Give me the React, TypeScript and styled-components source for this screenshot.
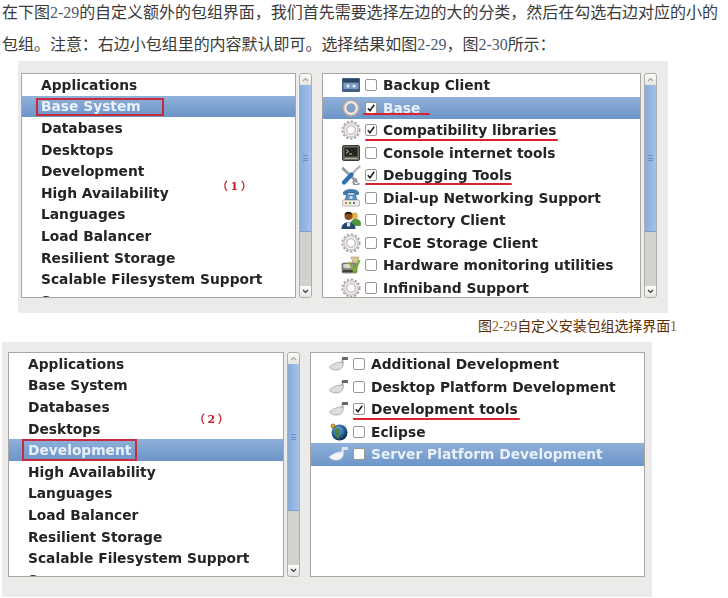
import React from "react";
import styled, { createGlobalStyle } from "styled-components";

const Global = createGlobalStyle`
  html, body { margin: 0; padding: 0; background: #fff; }
  body { width: 728px; height: 598px; overflow: hidden; }
`;

const Page = styled.div`
  display: flex;
  flex-direction: column;
  width: 728px;
  height: 598px;
  overflow: hidden;
`;

const Intro = styled.div`
  display: flex;
  flex-direction: column;
  gap: 8px;
  padding: 1px 0 0 2px;
  font-family: "Liberation Serif", "Noto Sans CJK SC", serif;
  font-size: 16px;
  line-height: 24px;
  font-weight: 400;
  letter-spacing: -0.03px;
  color: #3a3a3a;
  white-space: nowrap;
`;

const Num = styled.span`
  color: #4a5a70;
`;

const Panel = styled.div<{ $left: number; $top: number; $pl: number; $pt: number; $pb: number; $gap: number }>`
  display: flex;
  align-items: flex-start;
  flex: none;
  box-sizing: border-box;
  position: relative;
  width: 650px;
  margin-left: ${(p) => p.$left}px;
  margin-top: ${(p) => p.$top}px;
  padding: ${(p) => `${p.$pt}px 0 ${p.$pb}px ${p.$pl}px`};
  gap: 3px;
  background: #ecebe9;
  filter: blur(0.45px);
  & > *:nth-child(3) { margin-left: ${(p) => p.$gap - 3}px; }
`;

const List = styled.div<{ $w: number }>`
  box-sizing: border-box;
  flex: none;
  width: ${(p) => p.$w}px;
  height: 225px;
  border: 1px solid #a8a6a2;
  background: #fff;
  overflow: hidden;
`;

const Row = styled.div<{ $h: number; $sel?: boolean; $pad: number }>`
  position: relative;
  box-sizing: border-box;
  display: flex;
  align-items: center;
  height: ${(p) => p.$h}px;
  padding-left: ${(p) => p.$pad}px;
  background: ${(p) => (p.$sel ? "linear-gradient(#8fb0d9, #6c95c8)" : "transparent")};
  color: ${(p) => (p.$sel ? "#e9f0fa" : "#242424")};
  font-family: "DejaVu Sans", sans-serif;
  font-weight: 700;
  font-size: 13.8px;
  white-space: nowrap;
`;

const IconSlot = styled.span`
  flex: none;
  display: flex;
  width: 20px;
  height: 20px;
  margin-right: 4px;
`;

const Check = styled.span`
  flex: none;
  display: flex;
  align-items: center;
  justify-content: center;
  box-sizing: border-box;
  width: 12px;
  height: 12px;
  margin-right: 6px;
  border: 1px solid #989692;
  border-radius: 2px;
  background: #fff;
`;

const RedBox = styled.span<{ $l: number; $w: number; $t: number; $b: number }>`
  position: absolute;
  left: ${(p) => p.$l}px;
  width: ${(p) => p.$w}px;
  top: ${(p) => p.$t}px;
  bottom: ${(p) => p.$b}px;
  box-sizing: border-box;
  border: 2px solid #c92b3c;
`;

const Underline = styled.span<{ $l: number; $w: number; $b: number }>`
  position: absolute;
  left: ${(p) => p.$l}px;
  width: ${(p) => p.$w}px;
  bottom: ${(p) => p.$b}px;
  height: 2px;
  border-radius: 1px;
  background: #d9232e;
`;

const Mark = styled.span<{ $l: number; $t: number }>`
  position: absolute;
  left: ${(p) => p.$l}px;
  top: ${(p) => p.$t}px;
  font-family: "DejaVu Serif", "Noto Sans CJK SC", serif;
  font-size: 11px;
  line-height: 14px;
  font-weight: 700;
  color: #c8202a;
  letter-spacing: 2.5px;
  white-space: nowrap;
`;

const Scroll = styled.div`
  flex: none;
  display: flex;
  flex-direction: column;
  width: 13px;
  height: 225px;
  box-sizing: border-box;
  border: 1px solid #b0aeaa;
  border-radius: 3px;
  background: #d3d1ce;
  overflow: hidden;
`;

const Arrow = styled.div`
  flex: none;
  display: flex;
  align-items: center;
  justify-content: center;
  height: 11px;
  background: linear-gradient(#fbfbfa, #e6e5e3);
`;

const Thumb = styled.div`
  flex: none;
  display: flex;
  align-items: center;
  justify-content: center;
  height: 147px;
  background: linear-gradient(90deg, #86acdb, #a4c2e8);
  border-bottom: 1px solid #7d9dc6;
  box-sizing: border-box;
`;

const Grip = styled.div`
  width: 5px;
  height: 6px;
  border-top: 1px solid #6d8fbb;
  border-bottom: 1px solid #6d8fbb;
  box-sizing: border-box;
  background: linear-gradient(#6d8fbb, #6d8fbb) center / 100% 1px no-repeat;
`;

const Track = styled.div`
  flex: 1;
`;

const Caption = styled.div`
  flex: none;
  padding-left: 478px;
  font-family: "Liberation Serif", "Noto Sans CJK SC", serif;
  font-size: 14px;
  line-height: 28px;
  letter-spacing: -0.1px;
  color: #5f2c00;
  white-space: nowrap;
`;

const CapNum = styled.span`
  color: #8a5a1c;
`;

const Chevron = ({ up }: { up?: boolean }) => (
  <svg width="7" height="5" viewBox="0 0 7 5">
    <path d={up ? "M1 4 L3.5 1.5 L6 4" : "M1 1 L3.5 3.5 L6 1"} fill="none" stroke={up ? "#a9a7a3" : "#3a3a3a"} strokeWidth="1.2" />
  </svg>
);

const ScrollBar = () => (
  <Scroll>
    <Arrow><Chevron up /></Arrow>
    <Thumb><Grip /></Thumb>
    <Track />
    <Arrow><Chevron /></Arrow>
  </Scroll>
);

const Gear = () => (
  <svg width="20" height="20" viewBox="0 0 20 20">
    <circle cx="10" cy="10" r="8.6" fill="none" stroke="#a89f9c" strokeWidth="1.8" strokeDasharray="2.4 1.6" />
    <circle cx="10" cy="10" r="6" fill="none" stroke="#c9c2bf" strokeWidth="3.6" />
    <circle cx="10" cy="10" r="5.6" fill="none" stroke="#f4f1f0" strokeWidth="1.6" />
    <circle cx="10" cy="10" r="4.2" fill="none" stroke="#9c9492" strokeWidth="0.6" />
  </svg>
);

const Drive = () => (
  <svg width="20" height="20" viewBox="0 0 20 20">
    <rect x="1" y="3" width="18" height="14" rx="1" fill="#3f5f86" />
    <rect x="2" y="4" width="16" height="3" fill="#2d4568" />
    <rect x="2.5" y="8" width="15" height="6" fill="#7f9cc0" />
    <circle cx="7" cy="11" r="1.5" fill="#e6edf5" />
    <circle cx="13" cy="11" r="1.5" fill="#e6edf5" />
  </svg>
);

const Terminal = () => (
  <svg width="20" height="20" viewBox="0 0 20 20">
    <rect x="1.5" y="2.5" width="17" height="15" rx="1.5" fill="#6d6e68" stroke="#3a3a36" />
    <rect x="3.5" y="4.5" width="13" height="9" fill="#23261f" />
    <path d="M5 6.5 L7.5 8.5 L5 10.5 M8 11 H11" fill="none" stroke="#d8d8d0" strokeWidth="0.9" />
    <rect x="3.5" y="15" width="13" height="1" fill="#b4b4ac" />
  </svg>
);

const Tools = () => (
  <svg width="20" height="20" viewBox="0 0 20 20">
    <path d="M2 1.5 L5 4.5 L4 6.5 L2 6 L0.5 3.5 Z" fill="#9a9ea2" />
    <path d="M4 5.5 L15.5 16.5" stroke="#9a9ea2" strokeWidth="2.8" strokeLinecap="round" />
    <path d="M16 14.5 a2.8 2.8 0 1 0 2 3.5" fill="none" stroke="#8b8f93" strokeWidth="1.8" />
    <path d="M18.5 1.5 L11 9" stroke="#b4b8bc" strokeWidth="2.4" strokeLinecap="round" />
    <path d="M10.5 9.5 L3 17.5" stroke="#2f6fb4" strokeWidth="4.2" strokeLinecap="round" />
  </svg>
);

const Phone = () => (
  <svg width="20" height="20" viewBox="0 0 20 20">
    <path d="M2.5 4 C5 0.5 15 0.5 17.5 4 V6.5 H13.5 V5 H6.5 V6.5 H2.5 Z" fill="#3e7cb5" stroke="#27537e" strokeWidth="0.6" />
    <path d="M5.5 7 H14.5 L16 12 H4 Z" fill="#5b97cb" stroke="#27537e" strokeWidth="0.6" />
    <circle cx="10" cy="9.5" r="1.6" fill="#d7e6f3" />
    <rect x="1.5" y="12" width="17" height="6" rx="0.8" fill="#efeee9" stroke="#8f8f88" strokeWidth="0.6" />
    <rect x="4" y="14" width="2" height="2" fill="#d07a34" />
    <rect x="8" y="14" width="2" height="2" fill="#5d9b3e" />
    <rect x="12" y="14" width="2" height="2" fill="#3e7cb5" />
  </svg>
);

const People = () => (
  <svg width="20" height="20" viewBox="0 0 20 20">
    <circle cx="13.5" cy="6" r="3.4" fill="#e3b04a" />
    <path d="M10 13 C10 8 19.5 8 19.5 13 V15.5 H10 Z" fill="#4e9a3a" stroke="#2f6a22" strokeWidth="0.5" />
    <circle cx="7.5" cy="6" r="4" fill="#8a4f1e" />
    <path d="M3.6 5 C4 0.8 11 0.8 11.4 5 C9 3.4 6 3.4 3.6 5 Z" fill="#1d1a16" />
    <path d="M0.5 19 C0 10 14.5 10 14.5 19 Z" fill="#24496f" />
    <rect x="6" y="12.5" width="3.2" height="4" fill="#d8e0e8" />
  </svg>
);

const Monitor = () => (
  <svg width="20" height="20" viewBox="0 0 20 20">
    <rect x="1" y="8" width="15" height="10" rx="1.5" fill="#85867f" stroke="#55564f" strokeWidth="0.6" />
    <ellipse cx="7" cy="11" rx="5" ry="2.2" fill="#d9d9d4" />
    <rect x="2" y="15" width="13" height="2" fill="#3f403b" />
    <path d="M10 2 H18 L15.5 8 H12 Z" fill="#d8c8a0" stroke="#a8946a" strokeWidth="0.6" />
    <path d="M8.5 7 L13.5 17 L18.5 5" fill="none" stroke="#79b22f" strokeWidth="2.2" strokeLinejoin="round" />
  </svg>
);

const Trowel = ({ light }: { light?: boolean }) => (
  <svg width="20" height="20" viewBox="0 0 20 20">
    <path d="M0.3 13 C4 9.5 10 7.5 14 8 C15 11.5 13 15.5 8 16 C4.5 16.3 2 15 0.3 13 Z" fill={light ? "#f2f4f7" : "#dededa"} stroke={light ? "#dfe6ef" : "#9f9f9a"} strokeWidth="0.8" />
    <path d="M13.5 9 V4.5" stroke={light ? "#eef2f7" : "#a8a8a3"} strokeWidth="1.8" />
    <rect x="13" y="3" width="6" height="3" rx="0.6" fill={light ? "#dfe6ef" : "#666662"} />
  </svg>
);

const Globe = () => (
  <svg width="20" height="20" viewBox="0 0 20 20">
    <defs>
      <radialGradient id="gb" cx="0.4" cy="0.35" r="0.7">
        <stop offset="0" stopColor="#7fb4d8" />
        <stop offset="0.6" stopColor="#1f5f93" />
        <stop offset="1" stopColor="#0a1d33" />
      </radialGradient>
    </defs>
    <circle cx="10.5" cy="10.5" r="8" fill="url(#gb)" />
    <path d="M6 7 C9 5 12 7 11 10 C10 13 12 15 9 17 C6.5 15 5 11 6 7 Z" fill="#4e7f3a" opacity="0.9" />
    <circle cx="4" cy="4" r="2" fill="#d9a52a" stroke="#6b4d0f" strokeWidth="0.6" />
  </svg>
);

const Tick = () => (
  <svg width="10" height="10" viewBox="0 0 10 10">
    <path d="M1.8 5.2 L4 7.8 L8.2 1.8" fill="none" stroke="#1c1c1c" strokeWidth="1.5" />
  </svg>
);

type RightItem = { t: string; icon: React.ReactNode; on?: boolean; sel?: boolean; line?: [number, number, number] };

const names = [
  "Applications",
  "Base System",
  "Databases",
  "Desktops",
  "Development",
  "High Availability",
  "Languages",
  "Load Balancer",
  "Resilient Storage",
  "Scalable Filesystem Support",
  "Server",
];

const LeftList = ({ w, pad, sel, box }: { w: number; pad: number; sel: string; box: [number, number, number, number] }) => (
  <List $w={w}>
    {names.map((t) => (
      <Row key={t} $h={21.6} $pad={pad} $sel={t === sel}>
        {t}
        {t === sel && <RedBox $l={box[0]} $w={box[1]} $t={box[2]} $b={box[3]} />}
      </Row>
    ))}
  </List>
);

const RightList = ({ w, pad, items }: { w: number; pad: number; items: RightItem[] }) => (
  <List $w={w}>
    {items.map((i) => (
      <Row key={i.t} $h={22.5} $pad={pad} $sel={i.sel}>
        <IconSlot>{i.icon}</IconSlot>
        <Check>{i.on && <Tick />}</Check>
        {i.t}
        {i.line && <Underline $l={i.line[0]} $w={i.line[1]} $b={i.line[2]} />}
      </Row>
    ))}
  </List>
);

const base: RightItem[] = [
  { t: "Backup Client", icon: <Drive /> },
  { t: "Base", icon: <Gear />, on: true, sel: true, line: [40, 67, 4] },
  { t: "Compatibility libraries", icon: <Gear />, on: true, line: [42, 193, 1] },
  { t: "Console internet tools", icon: <Terminal /> },
  { t: "Debugging Tools", icon: <Tools />, on: true, line: [42, 147, 2] },
  { t: "Dial-up Networking Support", icon: <Phone /> },
  { t: "Directory Client", icon: <People /> },
  { t: "FCoE Storage Client", icon: <Gear /> },
  { t: "Hardware monitoring utilities", icon: <Monitor /> },
  { t: "Infiniband Support", icon: <Gear /> },
];

const dev: RightItem[] = [
  { t: "Additional Development", icon: <Trowel /> },
  { t: "Desktop Platform Development", icon: <Trowel /> },
  { t: "Development tools", icon: <Trowel />, on: true, line: [42, 167, 1] },
  { t: "Eclipse", icon: <Globe /> },
  { t: "Server Platform Development", icon: <Trowel light />, sel: true },
];

export default function App() {
  return (
    <Page>
      <Global />
      <Intro>
        <div>在下图<Num>2-29</Num>的自定义额外的包组界面，我们首先需要选择左边的大的分类，然后在勾选右边对应的小的</div>
        <div>包组。注意：右边小包组里的内容默认即可。选择结果如图<Num>2-29</Num>，图<Num>2-30</Num>所示：</div>
      </Intro>
      <Panel $left={18} $top={4} $pl={3} $pt={12} $pb={15} $gap={10}>
        <LeftList w={275} pad={19} sel="Base System" box={[14, 128, 2, 1]} />
        <ScrollBar />
        <RightList w={319} pad={18} items={base} />
        <ScrollBar />
        <Mark $l={199} $t={119}>（1）</Mark>
      </Panel>
      <Caption>图<CapNum>2-29</CapNum>自定义安装包组选择界面<CapNum>1</CapNum></Caption>
      <Panel $left={2} $top={1} $pl={6} $pt={10} $pb={20} $gap={10}>
        <LeftList w={276} pad={19} sel="Development" box={[13, 115, 0, 0]} />
        <ScrollBar />
        <RightList w={335} pad={18} items={dev} />
        <Mark $l={192} $t={71}>（2）</Mark>
      </Panel>
    </Page>
  );
}
